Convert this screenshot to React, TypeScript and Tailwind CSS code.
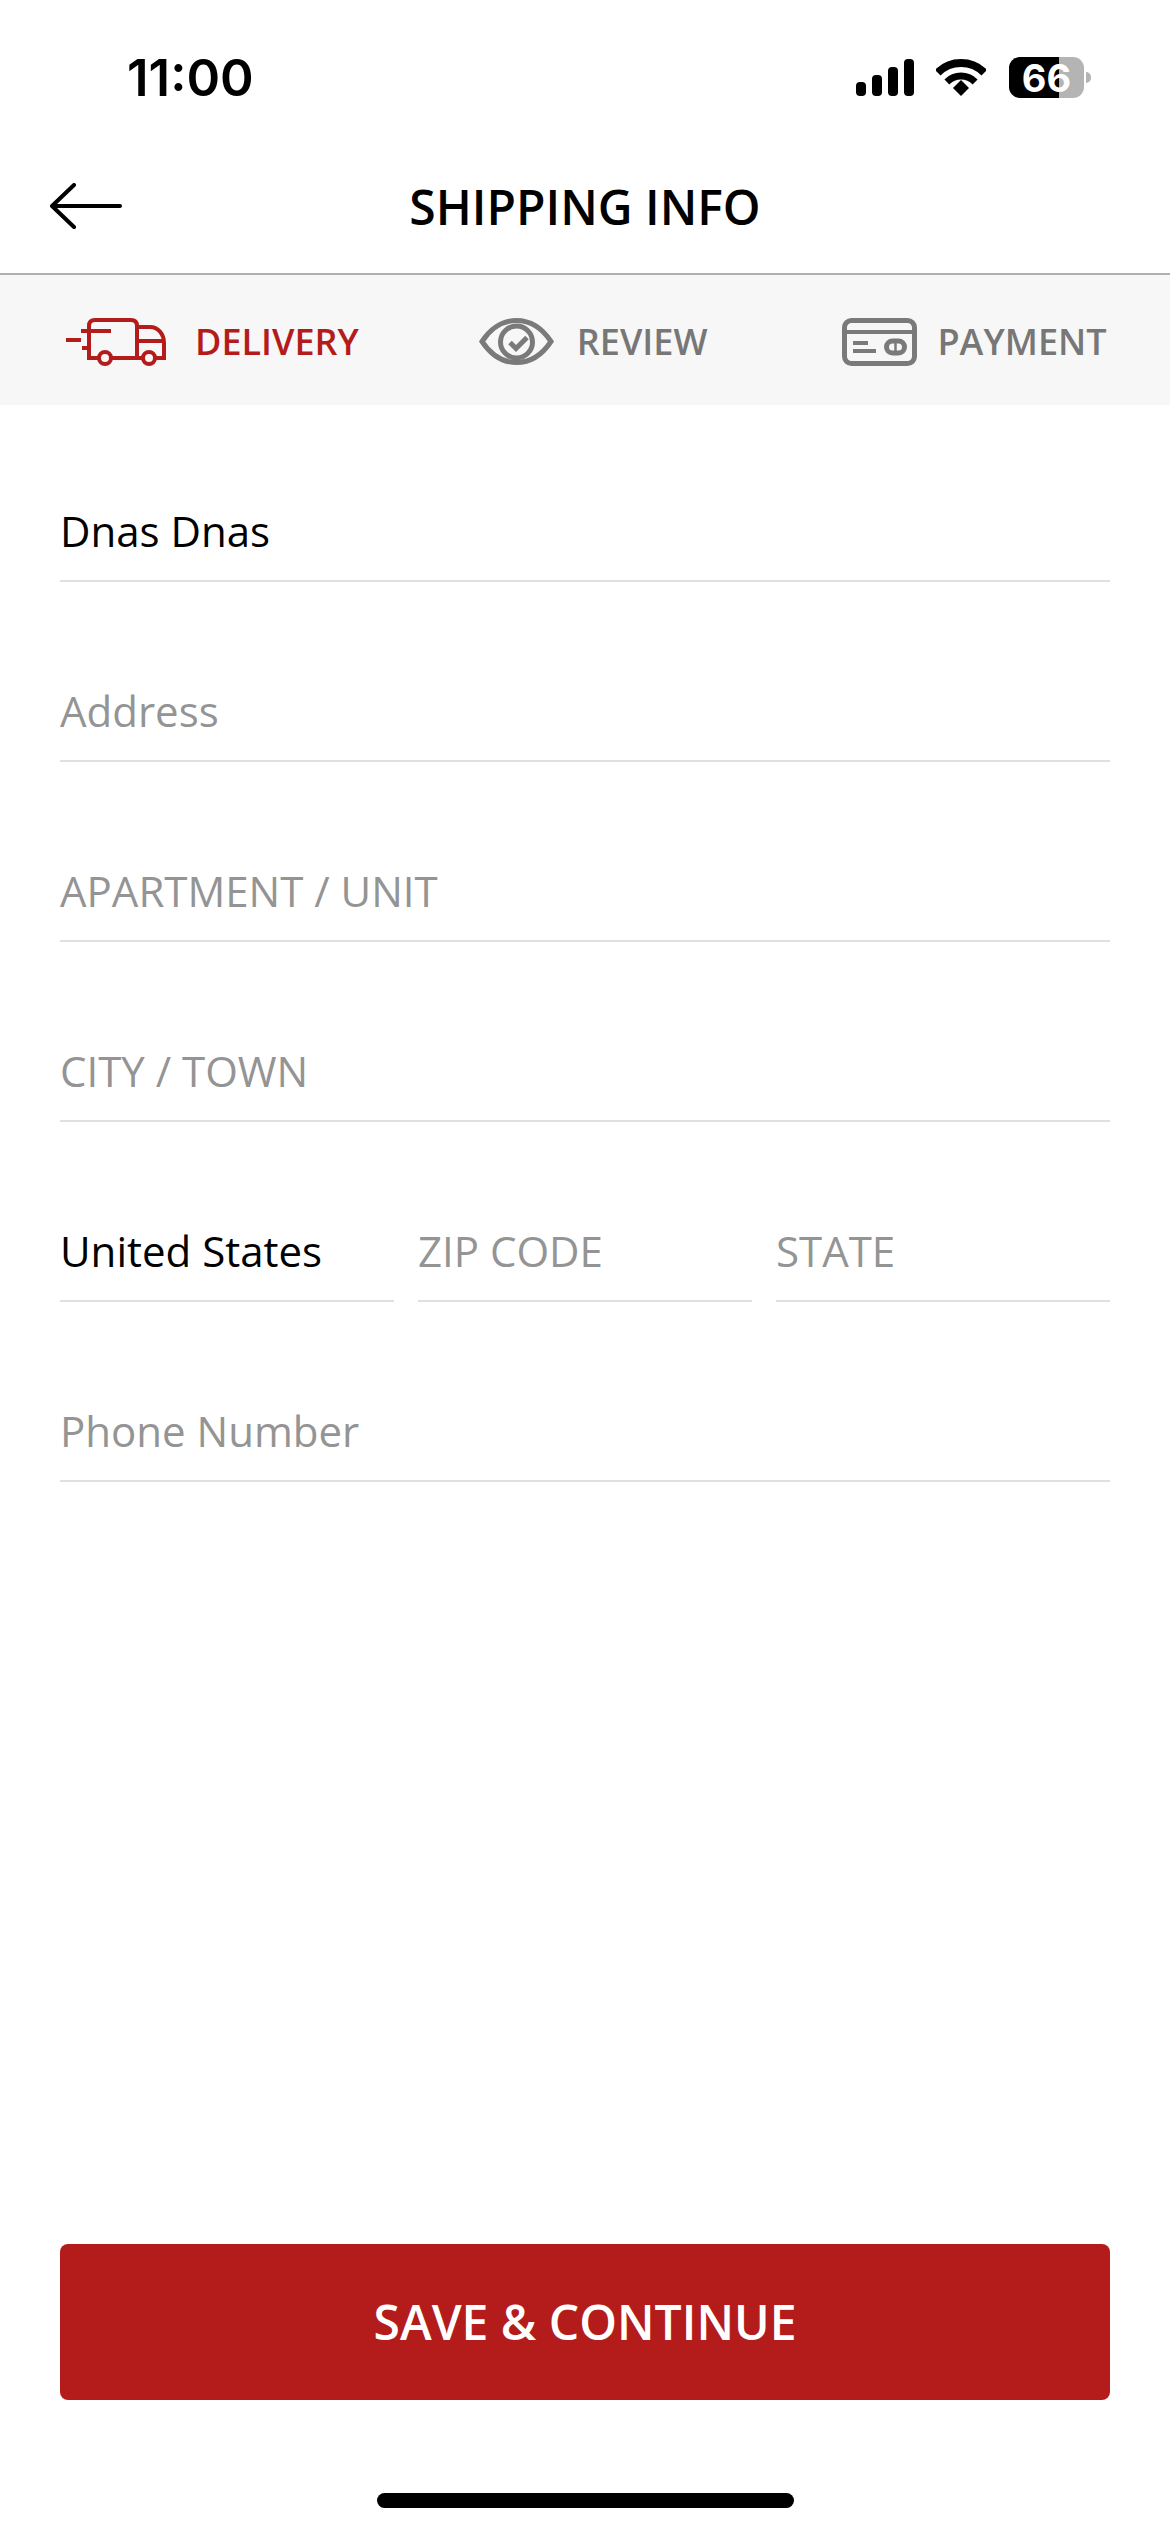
const FONT = "font-['Open_Sans',sans-serif]";

function BackArrow() {
  return (
    <svg width="72" height="46" viewBox="0 0 72 46" fill="none" stroke="#000" strokeWidth="4" strokeLinecap="round" strokeLinejoin="round">
      <path d="M2 23H70M24 2 2 23 24 44" />
    </svg>
  );
}

function TruckIcon() {
  return (
    <svg width="100" height="48" viewBox="16 28 100 48" fill="none" stroke="#b41c1c" strokeWidth="4">
      <path d="M39 36c0-4 2-6 6-6h36c4 0 6 2 6 6v32" />
      <path d="M39 36v32h10M61 68h32M105 68h9V53c0-9-6-16-14-16H87M87 51h27" />
      <circle cx="55" cy="68" r="6" />
      <circle cx="99" cy="68" r="6" />
      <path d="M31 41h30M16 50h15M32 58h7" />
    </svg>
  );
}

function EyeIcon() {
  return (
    <svg width="75" height="47" viewBox="18 23 75 47" fill="none" stroke="#7a7a7a" strokeWidth="5">
      <path d="M21 46.5C30 33 42 25.5 55.5 25.5S81 33 90 46.5C81 60 69 67.5 55.5 67.5S30 60 21 46.5Z" />
      <circle cx="55.5" cy="47" r="16" />
      <path d="M49 47.5l6 6 11-11" />
    </svg>
  );
}

function CardIcon() {
  return (
    <svg width="76" height="48" viewBox="11 18 76 48" fill="none" stroke="#7a7a7a" strokeWidth="5">
      <rect x="13.5" y="20.5" width="70" height="43" rx="7" />
      <path d="M13 32h71M22 43h15M22 51h23" strokeWidth="4" />
      <rect x="55.5" y="41" width="18" height="12" rx="6" />
      <path d="M64.5 42v10" strokeWidth="2.5" />
    </svg>
  );
}

function SignalIcon() {
  return (
    <svg width="58" height="37" viewBox="0 0 58 37" fill="#000">
      <rect x="0" y="23" width="10" height="14" rx="4" />
      <rect x="16" y="16" width="10" height="21" rx="4" />
      <rect x="32" y="8" width="10" height="29" rx="4" />
      <rect x="48" y="0" width="10" height="37" rx="4" />
    </svg>
  );
}

function WifiIcon() {
  return (
    <svg width="50" height="37" viewBox="0 0 50 37" fill="none" stroke="#000">
      <path d="M1.7 13.7a33 33 0 0 1 46.6 0" strokeWidth="8" />
      <path d="M10.9 22.9a20 20 0 0 1 28.2 0" strokeWidth="7" />
      <path d="M17 29 25 21 33 29 25 37Z" fill="#000" stroke="none" />
    </svg>
  );
}

function Battery() {
  return (
    <div className="flex items-center">
      <div className="relative h-[41px] w-[75px]">
        <div className="flex h-full overflow-hidden rounded-[11px]">
          <div className="w-[50px] bg-black" />
          <div className="flex-1 bg-[#b4b4b4]" />
        </div>
        <span className="absolute inset-0 flex items-center justify-center font-['Inter',sans-serif] text-[38px] leading-none font-bold text-white">
          66
        </span>
      </div>
      <div className="ml-[2px] h-[11px] w-[5px] rounded-r-full bg-[#b4b4b4]" />
    </div>
  );
}

function Field({ value, placeholder, className = "" }: { value?: string; placeholder?: string; className?: string }) {
  return (
    <div className={`border-b-2 border-[#e0e0e0] pb-[20px] text-[42px] leading-[58px] ${value ? "text-black" : "text-[#949494]"} ${className}`}>
      {value ?? placeholder}
    </div>
  );
}

export default function App() {
  return (
    <div className={`flex h-[2532px] w-full flex-col bg-white ${FONT}`}>
      <div className="flex h-[140px] items-start pt-[50px]">
        <span className="ml-[127px] font-['Inter',sans-serif] text-[51px] leading-[56px] font-semibold text-black">11:00</span>
        <div className="ml-auto mr-[79px] mt-[7px] flex items-center">
          <SignalIcon />
          <div className="ml-[22px]"><WifiIcon /></div>
          <div className="ml-[23px]"><Battery /></div>
        </div>
      </div>

      <div className="relative flex h-[135px] items-center justify-center border-b-2 border-[#b0b0b0]">
        <div className="absolute left-[50px] top-[43px]"><BackArrow /></div>
        <span className="text-[48px] leading-[60px] font-semibold text-black">SHIPPING INFO</span>
      </div>

      <div className="flex h-[130px] items-center bg-[#f7f7f7] pl-[66px] pt-[3px] text-[36px] font-semibold text-[#777777]">
        <TruckIcon />
        <span className="ml-[29px] text-[#b41c1c]">DELIVERY</span>
        <div className="ml-[120px]"><EyeIcon /></div>
        <span className="ml-[23px]">REVIEW</span>
        <div className="ml-[135px]"><CardIcon /></div>
        <span className="ml-[19px]">PAYMENT</span>
      </div>

      <div className="flex flex-col gap-[100px] px-[60px] pt-[97px]">
        <Field value="Dnas Dnas" />
        <Field placeholder="Address" />
        <Field placeholder="APARTMENT / UNIT" />
        <Field placeholder="CITY / TOWN" />
        <div className="grid grid-cols-3 gap-[24px]">
          <Field value="United States" />
          <Field placeholder="ZIP CODE" />
          <Field placeholder="STATE" />
        </div>
        <Field placeholder="Phone Number" />
      </div>

      <div className="flex-1" />

      <button className="mx-[60px] flex h-[156px] items-center justify-center rounded-[8px] bg-[#b41c1c] text-[48px] font-semibold text-white">
        SAVE &amp; CONTINUE
      </button>
      <div className="mx-auto mb-[24px] mt-[93px] h-[15px] w-[417px] rounded-full bg-black" />
    </div>
  );
}
